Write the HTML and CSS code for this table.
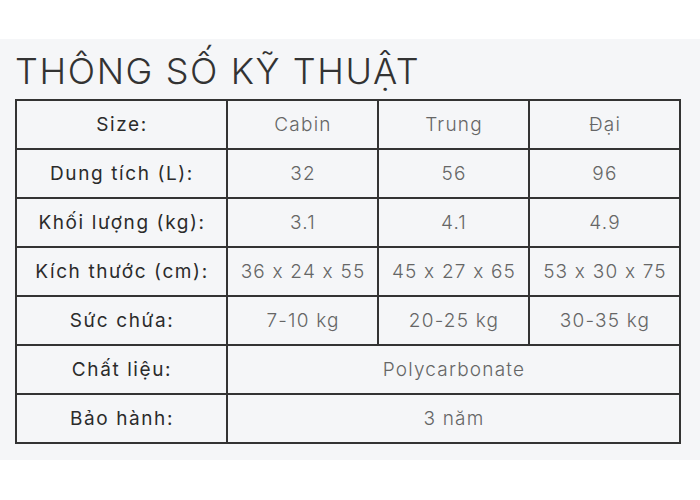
FILE: index.html
```html
<!DOCTYPE html>
<html lang="vi">
<head>
<meta charset="utf-8">
<link rel="stylesheet" href="styles.css">
</head>
<body>
<section class="specs">
  <h2 class="specs-title">THÔNG SỐ KỸ THUẬT</h2>
  <table class="specs-table">
    <colgroup>
      <col class="c-label"><col class="c-val"><col class="c-val"><col class="c-val">
    </colgroup>
    <tr><th>Size:</th><td>Cabin</td><td>Trung</td><td>Đại</td></tr>
    <tr><th>Dung tích (L):</th><td>32</td><td>56</td><td>96</td></tr>
    <tr><th>Khối lượng (kg):</th><td>3.1</td><td>4.1</td><td>4.9</td></tr>
    <tr><th>Kích thước (cm):</th><td>36 x 24 x 55</td><td>45 x 27 x 65</td><td>53 x 30 x 75</td></tr>
    <tr><th>Sức chứa:</th><td>7-10 kg</td><td>20-25 kg</td><td>30-35 kg</td></tr>
    <tr><th>Chất liệu:</th><td colspan="3">Polycarbonate</td></tr>
    <tr><th>Bảo hành:</th><td colspan="3">3 năm</td></tr>
  </table>
</section>
</body>
</html>
```
FILE: styles.css
```css
html, body {
  margin: 0;
  padding: 0;
  background: #ffffff;
}
body {
  padding-top: 39px;
  font-family: Inter, "Noto Sans", sans-serif;
  font-feature-settings: "calt" 0;
}
.specs {
  background: #f5f6f8;
  height: 421px;
  padding: 0 19px 0 15px;
  box-sizing: border-box;
  overflow: hidden;
}
.specs-title {
  margin: 0;
  padding-top: 12px;
  height: 48px;
  font-size: 36px;
  line-height: 40px;
  font-weight: 300;
  color: #333333;
  letter-spacing: 1.6px;
}
.specs-table {
  border-collapse: collapse;
  width: 666px;
  table-layout: fixed;
}
.c-label { width: 211px; }
.specs-table tr { height: 49px; }
.specs-table th,
.specs-table td {
  border: 2px solid #333333;
  text-align: center;
  vertical-align: middle;
  padding: 0 0 0 1px;
  font-size: 19px;
  white-space: nowrap;
}
.specs-table th {
  font-weight: 400;
  color: #2b2b2b;
  letter-spacing: 1.6px;
}
.specs-table td {
  font-weight: 300;
  color: #666666;
  letter-spacing: 1.2px;
}
```
